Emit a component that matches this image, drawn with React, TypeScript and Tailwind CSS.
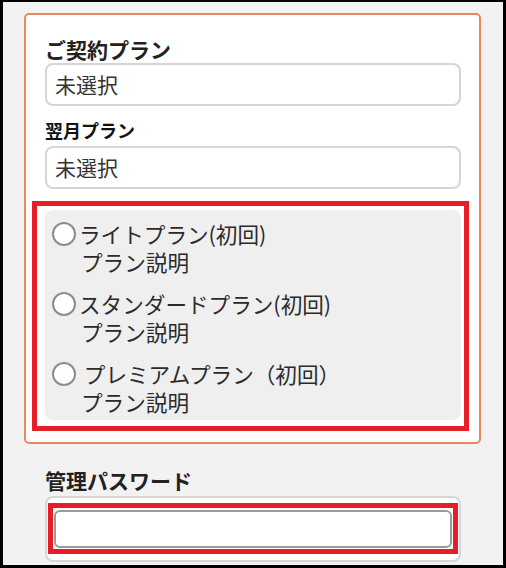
import React from "react";

const font = { fontFamily: '"Noto Sans CJK JP", "Noto Sans", sans-serif' };

function Radio({ title, desc }: { title: string; desc: string }) {
  return (
    <div className="flex flex-col">
      <div className="flex items-center h-[28px]">
        <span className="w-[24px] h-[24px] rounded-full border-2 border-[#8c8c8c] bg-white shrink-0" />
        <span className="ml-[3px] text-[21.6px] leading-[28px] text-[#2b2b2b] whitespace-pre">{title}</span>
      </div>
      <div className="pl-[29px] text-[21.6px] leading-[28px] text-[#2b2b2b]">{desc}</div>
    </div>
  );
}

export default function App() {
  return (
    <div
      className="w-[506px] h-[568px] overflow-hidden bg-[#f2f2f2] border-black border-l-[3px] border-r-[3px] border-t-[2px] border-b-[3px] box-border"
      style={font}
    >
      <div className="mt-[11px] ml-[21px] mr-[22px] bg-white border-2 border-[#e8885c] rounded-[5px] pt-[20px] pl-[19px] pr-[18px] pb-[22px]">
        <div className="text-[21px] leading-[28px] font-bold text-[#222]">ご契約プラン</div>
        <div className="h-[43px] border-2 border-[#d6d6d6] rounded-[8px] flex items-center pl-[8px] text-[21px] text-[#333]">
          未選択
        </div>
        <div className="mt-[10px] mb-[2px] text-[18px] leading-[28px] font-semibold text-[#111]">翌月プラン</div>
        <div className="h-[43px] border-2 border-[#d6d6d6] rounded-[8px] flex items-center pl-[8px] text-[21px] text-[#333]">
          未選択
        </div>
        <div className="relative mt-[21px]">
          <div className="bg-[#efefef] rounded-[8px] pt-[10px] pb-[4px] pl-[7px] flex flex-col gap-[14px]">
            <Radio title="ライトプラン(初回)" desc="プラン説明" />
            <Radio title="スタンダードプラン(初回)" desc="プラン説明" />
            <Radio title=" プレミアムプラン（初回）" desc="プラン説明" />
          </div>
          <div className="absolute left-[-13px] top-[-9px] right-[-8px] bottom-[-11px] border-[5px] border-[#e61e28] pointer-events-none" />
        </div>
      </div>
      <div className="px-[42px] mt-[22px]">
        <div className="text-[21px] leading-[28px] font-bold text-[#222]">管理パスワード</div>
        <div className="mt-[2px] border-2 border-[#d6d6d6] rounded-[8px] bg-white px-[7px] py-[12px]">
          <div className="relative">
            <div className="h-[38px] border-2 border-[#9a9a9a] rounded-[6px] bg-white" />
            <div className="absolute left-[-6px] right-[-6px] top-[-7px] bottom-[-6px] border-[5px] border-[#e61e28] pointer-events-none" />
          </div>
        </div>
      </div>
    </div>
  );
}
